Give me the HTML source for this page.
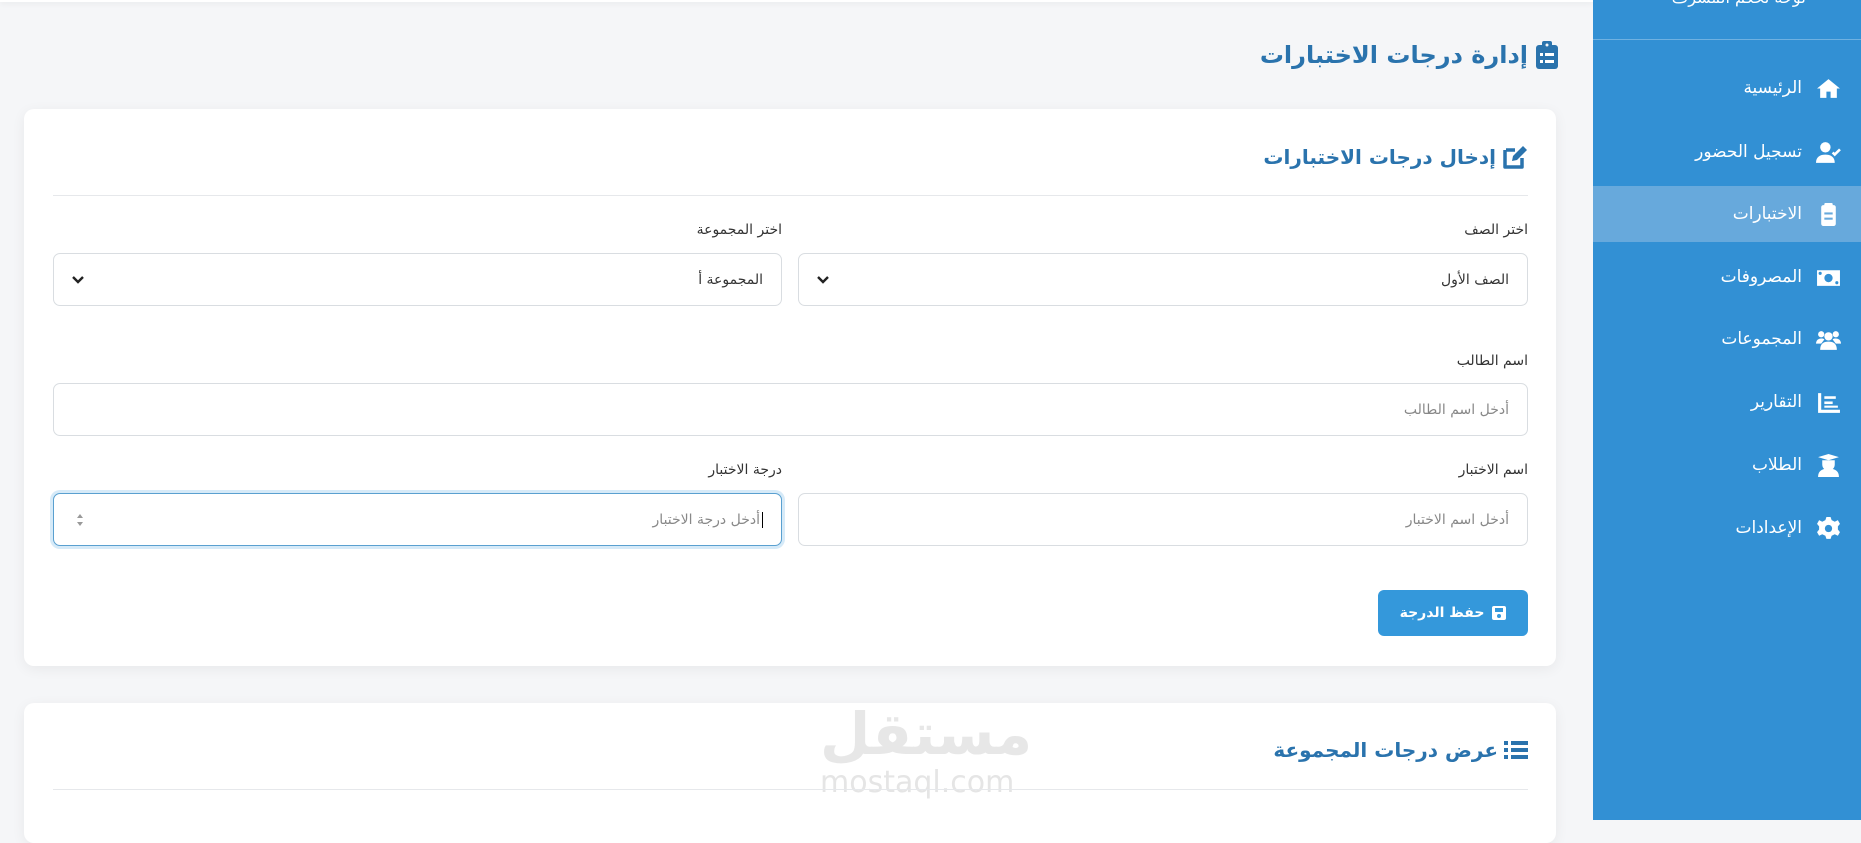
<!DOCTYPE html>
<html dir="rtl"><head><meta charset="utf-8">
<style>
*{box-sizing:border-box;margin:0;padding:0}
body{width:1861px;height:820px;overflow:hidden;background:#f5f6f8;font-family:"DejaVu Sans","Liberation Sans",sans-serif;position:relative;color:#333}
.abs{position:absolute}
.side{left:1593px;top:0;width:268px;height:820px;background:#3290d4}
.side .hd{position:absolute;top:-12px;right:55px;color:#fff;font-size:16px}
.side .line{position:absolute;top:39px;left:0;right:0;height:1px;background:rgba(255,255,255,.3)}
.mi{position:absolute;right:0;width:268px;height:56px;display:flex;align-items:center;justify-content:flex-start;padding-right:20px;color:#fff;font-size:17px}
.mi svg{width:25px;height:25px;margin-left:14px;fill:#fff}
.mi.act{background:#67a9dc}
.title{right:303px;top:41px;font-size:24px;font-weight:bold;color:#2a73ad;display:flex;align-items:center}
.card{left:24px;width:1532px;background:#fff;border-radius:10px;box-shadow:0 3px 14px rgba(0,0,0,.06)}
.ch{font-size:20px;font-weight:bold;color:#2a73ad;display:flex;align-items:center}
.hr{height:1px;background:#e6e8eb}
.lbl{font-size:14px;color:#333}
.inp{height:53px;border:1px solid #d9dde1;border-radius:7px;background:#fff;font-size:14px;display:flex;align-items:center;padding:0 18px}
.ph{color:#888}
.chev{margin-right:auto}
.btn{left:1378px;top:590px;width:150px;height:46px;background:#3498db;border-radius:6px;color:#fff;font-size:14px;font-weight:bold;display:flex;align-items:center;justify-content:center}
</style></head><body>
<div class="abs" style="left:0;top:0;width:1593px;height:2px;background:#fff;box-shadow:0 1px 6px rgba(0,0,0,.1)"></div>
<div class="abs title"><svg width="22" height="28" viewBox="0 0 22 28" style="margin-left:8px"><rect x="0" y="4" width="22" height="24" rx="3" fill="#2a73ad"/><rect x="6" y="0" width="10" height="7" rx="2" fill="#2a73ad"/><circle cx="11" cy="4" r="1.5" fill="#f5f6f8"/><rect x="4" y="12" width="3" height="3" fill="#fff"/><rect x="9" y="12" width="9" height="3" fill="#fff"/><rect x="4" y="19" width="3" height="3" fill="#fff"/><rect x="9" y="19" width="9" height="3" fill="#fff"/></svg>إدارة درجات الاختبارات</div>

<div class="abs card" style="top:109px;height:557px"></div>
<div class="abs ch" style="right:333px;top:144px"><svg width="26" height="26" viewBox="0 0 26 26" style="margin-left:6px"><path d="M4 6h9M3 6v17h17v-9" stroke="#2a73ad" stroke-width="3.5" fill="none" stroke-linejoin="round"/><path d="M10 17l1-5 10-10 4 4-10 10z" fill="#2a73ad"/></svg>إدخال درجات الاختبارات</div>
<div class="abs hr" style="left:53px;width:1475px;top:195px"></div>
<div class="abs lbl" style="right:333px;top:222px">اختر الصف</div>
<div class="abs lbl" style="right:1079px;top:222px">اختر المجموعة</div>
<div class="abs inp" style="left:798px;width:730px;top:253px">الصف الأول<svg class="chev" width="12" height="8" viewBox="0 0 12 8"><path d="M1 1l5 5 5-5" stroke="#222" stroke-width="2.4" fill="none"/></svg></div>
<div class="abs inp" style="left:53px;width:729px;top:253px">المجموعة أ<svg class="chev" width="12" height="8" viewBox="0 0 12 8"><path d="M1 1l5 5 5-5" stroke="#222" stroke-width="2.4" fill="none"/></svg></div>
<div class="abs lbl" style="right:333px;top:353px">اسم الطالب</div>
<div class="abs inp" style="left:53px;width:1475px;top:383px"><span class="ph">أدخل اسم الطالب</span></div>
<div class="abs lbl" style="right:333px;top:462px">اسم الاختبار</div>
<div class="abs lbl" style="right:1079px;top:462px">درجة الاختبار</div>
<div class="abs inp" style="left:798px;width:730px;top:493px"><span class="ph">أدخل اسم الاختبار</span></div>
<div class="abs inp" style="left:53px;width:729px;top:493px;border-color:#5aa0d0;box-shadow:0 0 0 3px rgba(52,152,219,.2)"><span style="border-right:1px solid #000;padding-right:2px" class="ph">أدخل درجة الاختبار</span><svg class="chev" width="8" height="14" viewBox="0 0 8 14" style="margin-left:4px"><path d="M1 5l3-4 3 4zM1 9l3 4 3-4z" fill="#999"/></svg></div>
<div class="abs btn"><svg width="14" height="14" viewBox="0 0 14 14" style="margin-left:8px"><rect width="14" height="14" rx="2" fill="#fff"/><rect x="3" y="2" width="8" height="4" fill="#3498db"/><circle cx="7" cy="10" r="2" fill="#3498db"/></svg>حفظ الدرجة</div>

<div class="abs card" style="top:703px;height:140px"></div>
<div class="abs" style="left:820px;top:700px;font-size:58px;font-weight:bold;color:#e7e7e7">مستقل</div>
<div class="abs" style="left:820px;top:765px;font-size:30px;color:#e5e5e5;direction:ltr">mostaql.com</div>
<div class="abs ch" style="right:333px;top:738px"><svg width="24" height="22" viewBox="0 0 24 22" style="margin-left:6px"><rect x="0" y="2" width="4" height="4" fill="#2a73ad"/><rect x="7" y="2" width="17" height="4" fill="#2a73ad"/><rect x="0" y="9" width="4" height="4" fill="#2a73ad"/><rect x="7" y="9" width="17" height="4" fill="#2a73ad"/><rect x="0" y="16" width="4" height="4" fill="#2a73ad"/><rect x="7" y="16" width="17" height="4" fill="#2a73ad"/></svg>عرض درجات المجموعة</div>
<div class="abs hr" style="left:53px;width:1475px;top:789px"></div>

<div class="abs side">
<div class="hd">لوحة تحكم المشرف</div>
<div class="line"></div>
<div class="mi" style="top:60px"><svg viewBox="0 0 24 24"><path d="M12 3L1 12h3v9h6v-6h4v6h6v-9h3z"/></svg>الرئيسية</div>
<div class="mi" style="top:124px"><svg viewBox="0 0 24 24"><circle cx="9" cy="7" r="5"/><path d="M0 22c0-6 4-8 9-8s9 2 9 8z"/><path d="M16 12l2 2 5-5" stroke="#fff" stroke-width="2.5" fill="none"/></svg>تسجيل الحضور</div>
<div class="mi act" style="top:186px"><svg viewBox="0 0 24 24"><rect x="5" y="3" width="14" height="20" rx="2"/><rect x="8" y="1" width="8" height="4" rx="1"/><rect x="8" y="10" width="8" height="2" fill="#67a9dc"/><rect x="8" y="15" width="8" height="2" fill="#67a9dc"/></svg>الاختبارات</div>
<div class="mi" style="top:249px"><svg viewBox="0 0 24 24"><path d="M1 5h22v15H1z"/><circle cx="12" cy="12.5" r="4" fill="#3290d4"/><circle cx="4" cy="8" r="1.5" fill="#3290d4"/><circle cx="20" cy="17" r="1.5" fill="#3290d4"/></svg>المصروفات</div>
<div class="mi" style="top:311px"><svg viewBox="0 0 24 24"><circle cx="5" cy="7" r="3"/><circle cx="19" cy="7" r="3"/><circle cx="12" cy="9" r="4"/><path d="M4 22c0-6 3-8 8-8s8 2 8 8z"/><path d="M0 16c0-3 2-5 5-5s3 1 3 1l-3 4z"/><path d="M24 16c0-3-2-5-5-5s-3 1-3 1l3 4z"/></svg>المجموعات</div>
<div class="mi" style="top:374px"><svg viewBox="0 0 24 24"><path d="M2 3h3v16h18v3H2z"/><rect x="8" y="6" width="11" height="2.5"/><rect x="8" y="11" width="8" height="2.5"/><rect x="8" y="15" width="13" height="2"/></svg>التقارير</div>
<div class="mi" style="top:437px"><svg viewBox="0 0 24 24"><path d="M2 4l10-3 10 3-10 3z"/><path d="M6 7h12v4a6 6 0 01-12 0z"/><path d="M2 23c0-6 4-8 10-8s10 2 10 8z"/></svg>الطلاب</div>
<div class="mi" style="top:500px"><svg viewBox="0 0 24 24"><path d="M10 1h4l1 3 3 1.5 3-1.5 2 3.5-2 2.5v3l2 2.5-2 3.5-3-1.5-3 1.5-1 3h-4l-1-3-3-1.5-3 1.5-2-3.5 2-2.5v-3l-2-2.5 2-3.5 3 1.5 3-1.5z"/><circle cx="12" cy="12" r="3.5" fill="#3290d4"/></svg>الإعدادات</div>
</div>
</body></html>
